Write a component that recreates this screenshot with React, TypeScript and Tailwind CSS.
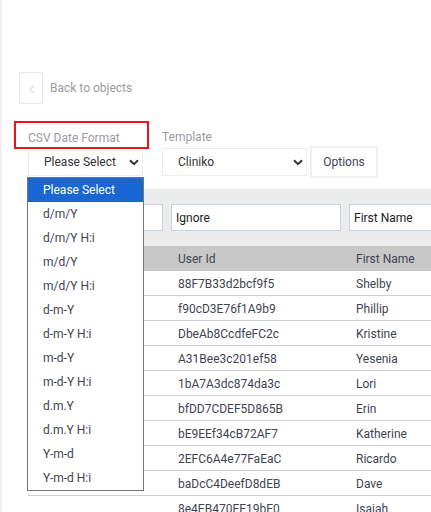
import { ChevronLeft } from "lucide-react";

const formats = [
  "Please Select",
  "d/m/Y",
  "d/m/Y H:i",
  "m/d/Y",
  "m/d/Y H:i",
  "d-m-Y",
  "d-m-Y H:i",
  "m-d-Y",
  "m-d-Y H:i",
  "d.m.Y",
  "d.m.Y H:i",
  "Y-m-d",
  "Y-m-d H:i",
];

const rows = [
  ["88F7B33d2bcf9f5", "Shelby"],
  ["f90cD3E76f1A9b9", "Phillip"],
  ["DbeAb8CcdfeFC2c", "Kristine"],
  ["A31Bee3c201ef58", "Yesenia"],
  ["1bA7A3dc874da3c", "Lori"],
  ["bfDD7CDEF5D865B", "Erin"],
  ["bE9EEf34cB72AF7", "Katherine"],
  ["2EFC6A4e77FaEaC", "Ricardo"],
  ["baDcC4DeefD8dEB", "Dave"],
  ["8e4EB470EE19bE0", "Isaiah"],
];

function Caret() {
  return (
    <svg width="10" height="7" viewBox="0 0 10 7" className="shrink-0">
      <path d="M1 1.2 5 5.2 9 1.2" fill="none" stroke="#333" strokeWidth="2" />
    </svg>
  );
}

export default function App() {
  return (
    <div className="relative h-[512px] w-[431px] overflow-hidden border-l-2 border-[#f0f0f0] bg-white font-['Roboto',sans-serif] text-[12px] text-[#3f4452]">
      <div className="pl-[17px] pt-[72px]">
        <div className="flex items-center gap-[7px]">
          <div className="flex h-[32px] w-[24px] items-center justify-center border border-[#e8e8e8] pt-[2px] text-[#a8a8a8]">
            <ChevronLeft size={13} strokeWidth={1.25} />
          </div>
          <span className="text-[#9a9aa2]">Back to objects</span>
        </div>

        <div className="mt-[24px] flex items-end pl-[9px]">
          <div className="w-[115px]">
            <div className="pb-[1px] text-[#9a9aa2]">CSV Date Format</div>
            <div className="flex h-[28px] items-center justify-between border border-[#ececec] pl-[15px] pr-[3px] text-[#333]">
              Please Select
              <Caret />
            </div>
          </div>
          <div className="ml-[19px] w-[145px]">
            <div className="pb-[2px] text-[#9a9aa2]">Template</div>
            <div className="flex h-[28px] items-center justify-between border border-[#ececec] pl-[15px] pr-[3px] text-[#333]">
              Cliniko
              <Caret />
            </div>
          </div>
          <div className="ml-[3px] flex h-[32px] w-[68px] translate-y-[2px] items-center justify-center border-2 border-[#f0f0f0]">
            Options
          </div>
        </div>

        <div className="ml-[9px] mt-[13px] w-[480px] bg-[#ececec]">
          <div className="flex gap-[8px] py-[15px]">
            <div className="h-[27px] w-[135px] shrink-0 border border-[#c5d3da] bg-white" />
            <div className="flex h-[27px] w-[170px] shrink-0 items-center border border-[#c5d3da] bg-white px-[4px] text-[#222]">
              Ignore
            </div>
            <div className="flex h-[27px] w-[170px] shrink-0 items-center border border-[#c5d3da] bg-white px-[4px] text-[#222]">
              First Name
            </div>
          </div>
          <div className="flex h-[25px] items-center bg-[#c8c8c8] pl-[150px]">
            <div className="w-[178px]">User Id</div>
            <div>First Name</div>
          </div>
        </div>

        <div className="ml-[9px] w-[480px]">
          {rows.map((row) => (
            <div
              key={row[0]}
              className="flex h-[25px] items-center border-b border-[#d0d0d0] pl-[150px] pt-[1px]"
            >
              <div className="w-[178px]">{row[0]}</div>
              <div>{row[1]}</div>
            </div>
          ))}
        </div>
      </div>

      {/* red note around the field label */}
      <div className="absolute left-[12px] top-[121px] h-[28px] w-[135px] border-2 border-[#e8151b]" />

      {/* open select list */}
      <div className="absolute left-[25px] top-[177px] w-[117px] border border-[#767676] bg-white">
        {formats.map((f, i) => (
          <div
            key={f}
            className={
              i === 0
                ? "flex h-[24px] items-center bg-[#1967d2] pl-[15px] text-white"
                : "flex h-[24px] items-center pl-[15px]"
            }
          >
            {f}
          </div>
        ))}
      </div>
    </div>
  );
}
